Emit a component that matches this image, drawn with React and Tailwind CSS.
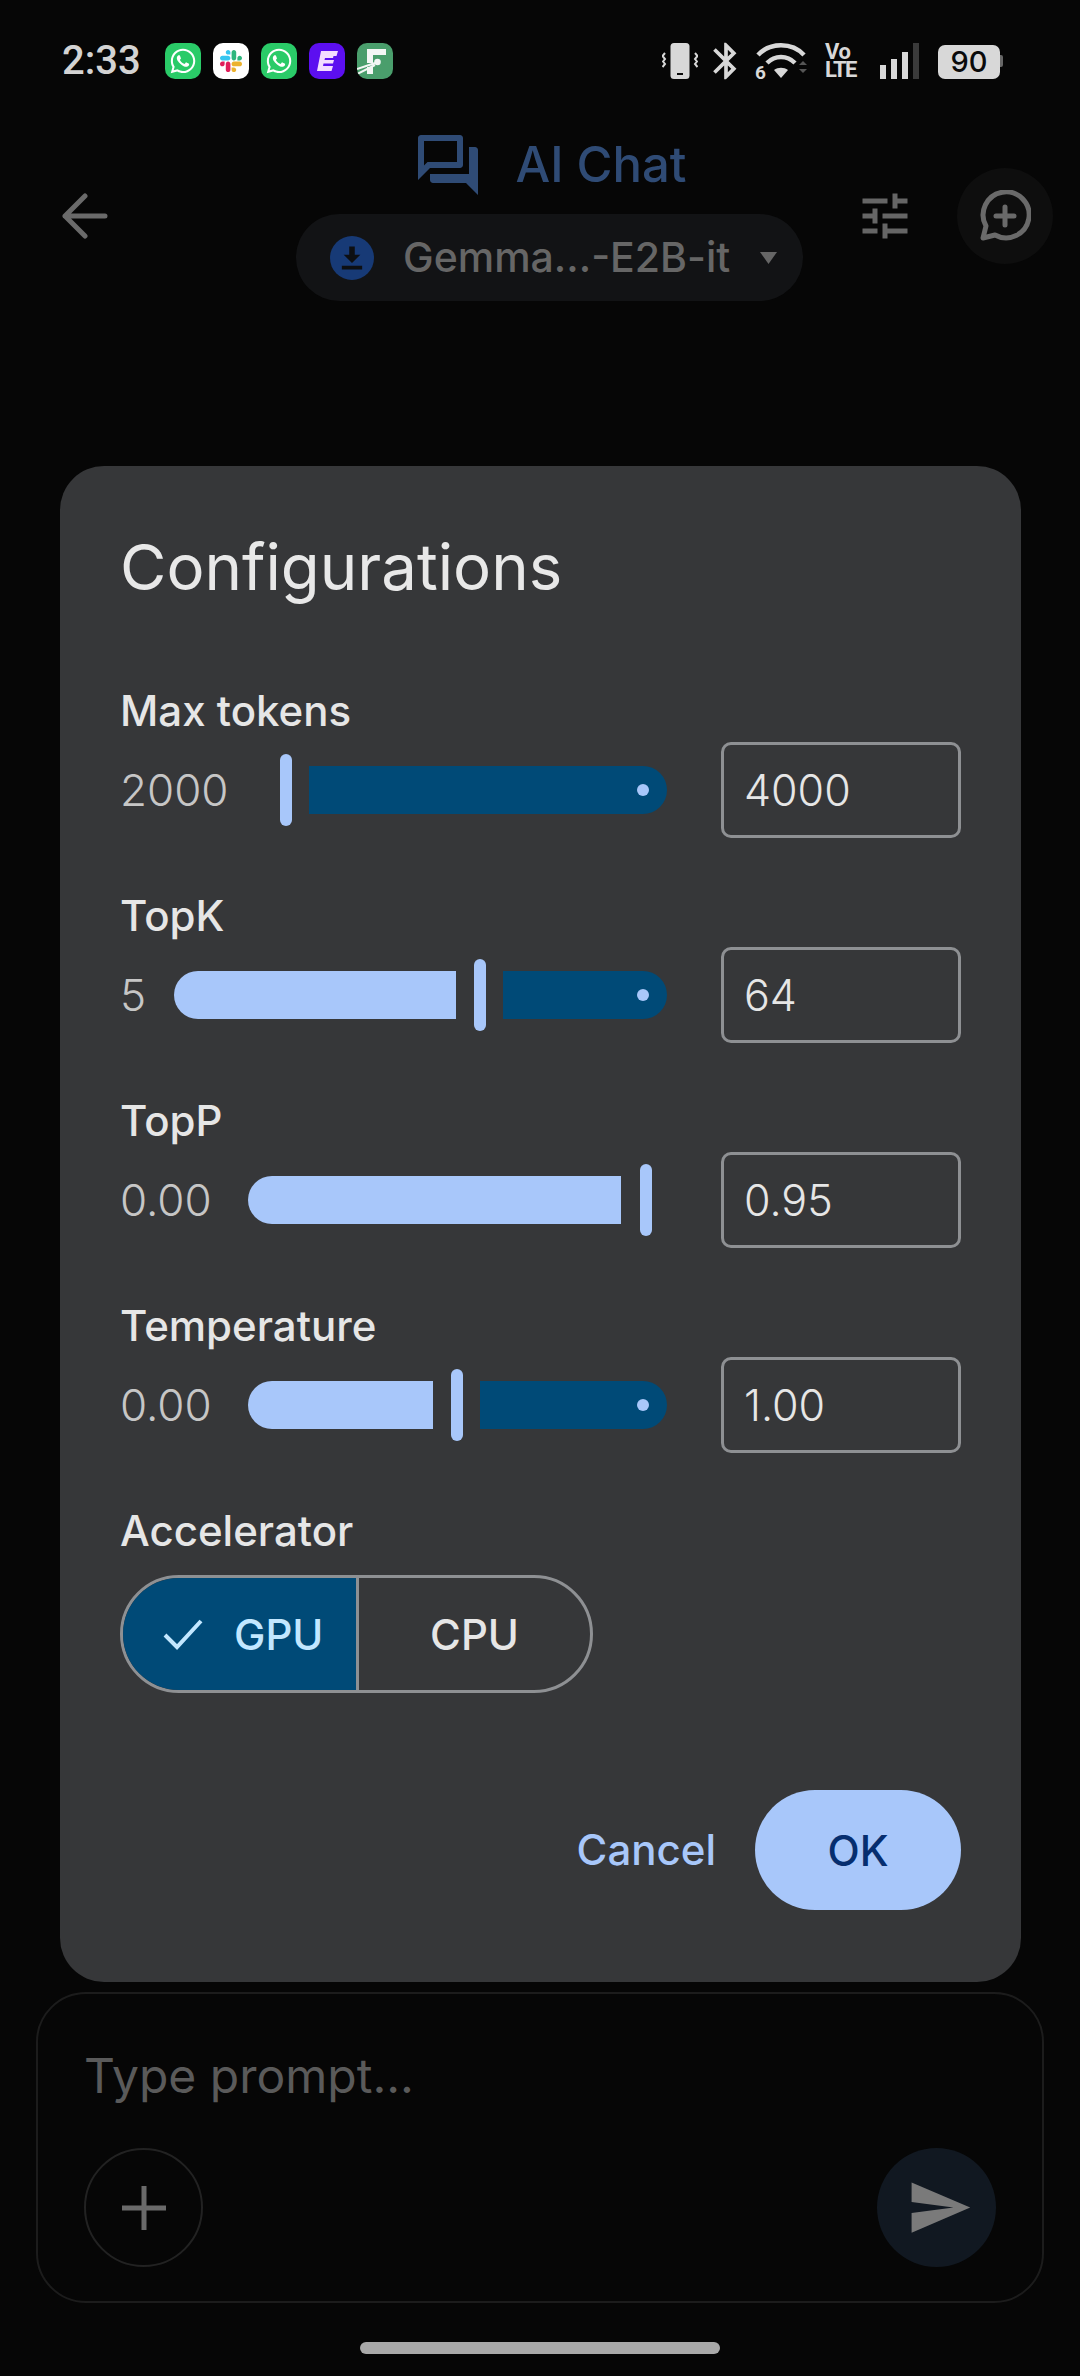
import React from "react";
import { FaWhatsapp } from "react-icons/fa";
import { MdBluetooth, MdOutlineForum, MdTune, MdSend } from "react-icons/md";

function WhatsappIcon() {
  return (
    <div className="w-[36px] h-[36px] rounded-[10px] bg-[#2acb68] flex items-center justify-center text-white">
      <FaWhatsapp size={28} />
    </div>
  );
}

function SlackIcon() {
  return (
    <div className="w-[36px] h-[36px] rounded-[10px] bg-white flex items-center justify-center">
      <svg width="22" height="22" viewBox="0 0 122.8 122.8">
        <path fill="#e01e5a" d="M25.8 77.6c0 7.1-5.8 12.9-12.9 12.9S0 84.7 0 77.6s5.8-12.9 12.9-12.9h12.9v12.9zM32.3 77.6c0-7.1 5.8-12.9 12.9-12.9s12.9 5.8 12.9 12.9v32.3c0 7.1-5.8 12.9-12.9 12.9s-12.9-5.8-12.9-12.9V77.6z" />
        <path fill="#36c5f0" d="M45.2 25.8c-7.1 0-12.9-5.8-12.9-12.9S38.1 0 45.2 0s12.9 5.8 12.9 12.9v12.9H45.2zM45.2 32.3c7.1 0 12.9 5.8 12.9 12.9s-5.8 12.9-12.9 12.9H12.9C5.8 58.1 0 52.3 0 45.2s5.8-12.9 12.9-12.9h32.3z" />
        <path fill="#2eb67d" d="M97 45.2c0-7.1 5.8-12.9 12.9-12.9s12.9 5.8 12.9 12.9-5.8 12.9-12.9 12.9H97V45.2zM90.5 45.2c0 7.1-5.8 12.9-12.9 12.9s-12.9-5.8-12.9-12.9V12.9C64.7 5.8 70.5 0 77.6 0s12.9 5.8 12.9 12.9v32.3z" />
        <path fill="#ecb22e" d="M77.6 97c7.1 0 12.9 5.8 12.9 12.9s-5.8 12.9-12.9 12.9-12.9-5.8-12.9-12.9V97h12.9zM77.6 90.5c-7.1 0-12.9-5.8-12.9-12.9s5.8-12.9 12.9-12.9h32.3c7.1 0 12.9 5.8 12.9 12.9s-5.8 12.9-12.9 12.9H77.6z" />
      </svg>
    </div>
  );
}

function PurpleIcon() {
  return (
    <div className="w-[36px] h-[36px] rounded-[10px] bg-[#5c0ff0] flex items-center justify-center">
      <svg width="21" height="20" viewBox="0 0 21 20" fill="#f3dcff">
        <path d="M4 0h17l-1.500 5h-3l-.5 2h-8l-.5 2h9.500l-1 3.500h-9.500L6 15h10l-1.500 5H0z" />
      </svg>
    </div>
  );
}

function GreenIcon() {
  return (
    <div className="w-[36px] h-[36px] rounded-[10px] bg-[#4a9e6c] overflow-hidden">
      <svg width="36" height="36" viewBox="0 0 36 36">
        <path fill="#f4f7f5" d="M10 6h19v6H16v8h-6zM10 24h6v7h-6z" />
        <circle cx="20.500" cy="19" r="3.300" fill="#f4f7f5" />
        <path d="M0 26l18-6M0 31l18-9" stroke="#f4f7f5" strokeWidth="2" />
      </svg>
    </div>
  );
}

function StatusBar() {
  return (
    <div className="flex items-center h-[36px] mt-[43px] pl-[62px] text-[#d3d3d3]">
      <span className="w-[103px] text-[40px] leading-[36px] font-medium font-['Roboto',sans-serif]">2:33</span>
      <div className="flex gap-[12px]">
        <WhatsappIcon />
        <SlackIcon />
        <WhatsappIcon />
        <PurpleIcon />
        <GreenIcon />
      </div>
      <svg className="ml-[269px]" width="36" height="36" viewBox="0 0 36 36" fill="#d8d8d8">
        <rect x="8.500" y="0" width="19" height="36" rx="3.500" />
        <rect x="15" y="30" width="6" height="2" fill="#0a0a0a" />
        <path d="M3 10l-2.500 3L3 16l-2 2.500L3 21l-2.500 3M33 10l2.500 3L33 16l2 2.500L33 21l2.500 3" fill="none" stroke="#d8d8d8" strokeWidth="2" />
      </svg>
      <MdBluetooth className="ml-[6px] text-[#d8d8d8]" size={44} />
      <svg className="ml-[7px] mt-[6px]" width="54" height="42" viewBox="0 0 54 42">
        <path d="M3 12C15 -1 37 -1 49 12M12 20c8-8 20-8 28 0" fill="none" stroke="#d8d8d8" strokeWidth="4.500" />
        <path d="M19 27c4-3 10-3 14 0l-7 8z" fill="#d8d8d8" />
        <path d="M44 22l4-4 4 4zM44 26l4 4 4-4z" fill="#555" />
        <text x="0" y="36" fontSize="19" fontWeight="700" fill="#d8d8d8" fontFamily="Roboto, sans-serif">6</text>
      </svg>
      <div className="ml-[16px] w-[33px] h-[36px] flex flex-col items-start text-[#d8d8d8] font-bold font-['Roboto',sans-serif] text-[22px] leading-[18px]">
        <span className="tracking-[-0.5px]">Vo</span>
        <span className="tracking-[-1.5px]">LTE</span>
      </div>
      <div className="ml-[22px] flex items-end gap-[5px] h-[36px]">
        <div className="w-[6px] h-[14px] bg-[#d8d8d8]" />
        <div className="w-[6px] h-[20px] bg-[#d8d8d8]" />
        <div className="w-[6px] h-[27px] bg-[#d8d8d8]" />
        <div className="w-[6px] h-[36px] bg-[#3a3a3a]" />
      </div>
      <div className="ml-[19px] flex items-center">
        <div className="w-[62px] h-[34px] mt-[2px] rounded-[7px] bg-[#d8d8d8] text-[#0a0a0a] text-[29px] font-medium font-['Inter',sans-serif] leading-[34px] text-center">90</div>
        <div className="w-[3px] h-[12px] rounded-r-[2px] bg-[#666]" />
      </div>
    </div>
  );
}

function Header() {
  return (
    <div className="flex items-center mt-[56px] pl-[61px]">
      <svg className="mb-[5px]" width="47" height="46" viewBox="0 0 47 46" fill="none" stroke="#6a6a6a" strokeWidth="5" strokeLinecap="round" strokeLinejoin="round">
        <path d="M44 23H4M24 3L4 23l20 20" />
      </svg>
      <div className="ml-[188px] w-[507px] flex flex-col items-center">
        <div className="flex items-center h-[60px] text-[#2f4b75]">
          <MdOutlineForum size={72} />
          <span className="ml-[31px] text-[49px] leading-[60px] font-medium font-['Inter',sans-serif]">AI Chat</span>
        </div>
        <div className="mt-[19px] w-full h-[87px] rounded-full bg-[#121315] flex items-center pl-[34px] text-[#666666]">
          <div className="w-[44px] h-[44px] rounded-full bg-[#173a76] flex items-center justify-center">
            <svg width="24" height="27" viewBox="0 0 26 28" fill="#0d0f12">
              <path d="M10 2h6v9h6l-9 9-9-9h6zM2 23h22v4H2z" />
            </svg>
          </div>
          <span className="ml-[29px] text-[41px] font-medium font-['Inter',sans-serif]">Gemma...-E2B-it</span>
          <svg className="ml-[30px]" width="17" height="12" viewBox="0 0 17 12" fill="#666666">
            <path d="M0 0h17l-8.500 12z" />
          </svg>
        </div>
      </div>
      <MdTune className="ml-[52px] mb-[5px] text-[#666666]" size={60} />
      <div className="ml-[42px] mb-[5px] w-[96px] h-[96px] rounded-full bg-[#0e0e0e] flex items-center justify-center">
        <svg width="52" height="52" viewBox="0 0 52 52" fill="none" stroke="#6a6a6a" strokeWidth="5" strokeLinejoin="round">
          <path d="M4 48l3-12A23 23 0 1 1 16 45z" />
          <path d="M26 17v18M17 26h18" strokeLinecap="round" />
        </svg>
      </div>
    </div>
  );
}

function Setting({ label, value, valueClass, active, rest, input, start }) {
  return (
    <div>
      <div className="h-[45px] text-[#e6e6e6] text-[42px] leading-[42px] font-medium font-['Inter',sans-serif]">{label}</div>
      <div className="mt-[7px] h-[96px] flex items-center">
        <span className={"text-[#c6c6c6] text-[44px] font-['Inter',sans-serif] font-light " + valueClass}>{value}</span>
        <div className={"flex-1 flex items-center ml-[32px] " + (start || "")}>
          {active}
          <div className="w-[12px] h-[72px] rounded-full bg-[#a8c7fa] flex-none" />
          {rest}
        </div>
        <div className="ml-[54px] w-[240px] h-[96px] border-[3px] border-[#8e9093] rounded-[10px] pl-[20px] flex items-center text-[#e6e6e6] text-[43px] font-['Inter',sans-serif] font-light">{input}</div>
      </div>
    </div>
  );
}

function Track() {
  return (
    <div className="ml-[17px] flex-1 h-[48px] bg-[#004a77] rounded-l-[6px] rounded-r-full flex items-center justify-end pr-[18px]">
      <div className="w-[12px] h-[12px] rounded-full bg-[#a8c7fa]" />
    </div>
  );
}

function Dialog() {
  return (
    <div className="absolute left-[60px] top-[466px] w-[961px] h-[1516px] rounded-[44px] bg-[#363739] px-[60px] pt-[61px]">
      <div className="h-[80px] text-[#e8e8e8] text-[63.500px] leading-[80px] font-['Inter',sans-serif]">Configurations</div>
      <div className="mt-[83px] flex flex-col gap-[57px]">
        <Setting label="Max tokens" value="2000" valueClass="w-[106px]" start="pl-[22px]" rest={<Track />} input="4000" />
        <Setting label="TopK" value="5" valueClass="w-[22px]" active={<div className="w-[282px] mr-[18px] h-[48px] bg-[#a8c7fa] rounded-l-full rounded-r-[6px]" />} rest={<Track />} input="64" />
        <Setting label="TopP" value="0.00" valueClass="w-[96px]" active={<div className="w-[373px] mr-[19px] h-[48px] bg-[#a8c7fa] rounded-l-full rounded-r-[6px]" />} input="0.95" />
        <Setting label="Temperature" value="0.00" valueClass="w-[96px]" active={<div className="w-[185px] mr-[18px] h-[48px] bg-[#a8c7fa] rounded-l-full rounded-r-[6px]" />} rest={<Track />} input="1.00" />
      </div>
      <div className="mt-[57px] h-[45px] text-[#e6e6e6] text-[42px] leading-[42px] font-medium font-['Inter',sans-serif]">Accelerator</div>
      <div className="mt-[20px] w-[473px] h-[118px] rounded-full border-[3px] border-[#8e9093] overflow-hidden flex text-[42px] font-medium font-['Inter',sans-serif]">
        <div className="w-[236px] h-full bg-[#004a77] flex items-center pl-[40px] text-[#c2e7ff] border-r-[3px] border-[#8e9093]">
          <svg width="40" height="32" viewBox="0 0 40 32" fill="none" stroke="#c2e7ff" strokeWidth="4">
            <path d="M2 17l12 12L38 3" />
          </svg>
          <span className="ml-[31px]">GPU</span>
        </div>
        <div className="flex-1 flex items-center justify-center text-[#e6e6e6]">CPU</div>
      </div>
      <div className="mt-[97px] flex items-center justify-end">
        <span className="mb-[2px] text-[#a8c7fa] text-[42px] font-medium font-['Inter',sans-serif]">Cancel</span>
        <div className="ml-[39px] w-[206px] h-[120px] rounded-full bg-[#a8c7fa] flex items-center justify-center text-[#062e6f] text-[42px] font-medium font-['Inter',sans-serif]">OK</div>
      </div>
    </div>
  );
}

function PromptBox() {
  return (
    <div className="mx-[36px] h-[311px] rounded-[50px] border-[2px] border-[#1c1c1c] px-[46px] pt-[52px]">
      <div className="h-[60px] text-[#5a5a5a] text-[48px] leading-[60px] font-['Inter',sans-serif]">Type prompt...</div>
      <div className="mt-[42px] flex items-center justify-between">
        <div className="w-[119px] h-[119px] rounded-full border-[2px] border-[#222222] flex items-center justify-center">
          <svg width="44" height="44" viewBox="0 0 44 44" fill="#6a6a6a">
            <path d="M19.500 0h5v19.500H44v5H24.500V44h-5V24.500H0v-5h19.500z" />
          </svg>
        </div>
        <div className="w-[119px] h-[119px] rounded-full bg-[#111821] flex items-center justify-center text-[#7a7a7a]">
          <MdSend className="ml-[5px]" size={67} />
        </div>
      </div>
    </div>
  );
}

export default function App() {
  return (
    <div className="relative w-[1080px] h-[2376px] bg-[#060606] overflow-hidden flex flex-col">
      <StatusBar />
      <Header />
      <div className="flex-1" />
      <PromptBox />
      <div className="mt-[39px] mb-[22px] mx-auto w-[360px] h-[12px] rounded-full bg-[#a9a9a9]" />
      <Dialog />
    </div>
  );
}
